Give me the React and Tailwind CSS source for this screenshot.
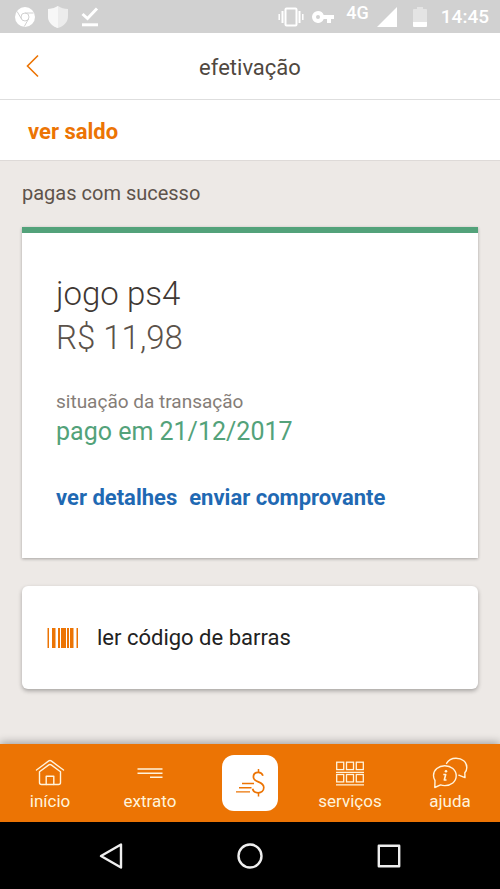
const ChromeIcon = () => (
  <svg className="w-5 h-5" viewBox="0 0 20 20" fill="none" aria-hidden="true">
    <circle cx="10" cy="10" r="10" fill="#fff" />
    <g stroke="#d1d1d1" strokeWidth="1">
      <circle cx="10" cy="10" r="4" />
      <path d="M10 6h8.6M6.5 12 2.2 4.6M13.5 12l-4.3 7.6" />
    </g>
  </svg>
);

const ShieldIcon = () => (
  <svg className="w-[22px] h-6" viewBox="0 0 22 24" aria-hidden="true">
    <path d="M11 1c3 2 6 3 10 3v7c0 6-4 10-10 12C5 21 1 17 1 11V4c4 0 7-1 10-3z" fill="#ececec" />
    <path d="M11 1C8 3 5 4 1 4v7c0 6 4 10 10 12z" fill="#f7f7f7" />
  </svg>
);

const DoneIcon = () => (
  <svg className="w-[18px] h-5" viewBox="0 0 18 20" fill="none" stroke="#fff" aria-hidden="true">
    <path d="M1.5 7 6.5 11.5 16 1.5" strokeWidth="3" />
    <path d="M1 17.8h16" strokeWidth="3" />
  </svg>
);

const VibrateIcon = () => (
  <svg className="w-[26px] h-5" viewBox="0 0 26 20" fill="none" stroke="#fff" aria-hidden="true">
    <rect x="7.5" y="1.5" width="11" height="17" rx="1" strokeWidth="2" />
    <path d="M4.5 4v12M21.5 4v12" strokeWidth="2" />
    <path d="M1.2 7v6M24.8 7v6" strokeWidth="1.5" />
  </svg>
);

const KeyIcon = () => (
  <svg className="w-[22px] h-3" viewBox="0 0 22 12" aria-hidden="true">
    <path
      fill="#fff"
      fillRule="evenodd"
      d="M6 0a6 6 0 1 0 5.7 8H15v4h4V8h3V4H11.7A6 6 0 0 0 6 0zm0 4a2 2 0 1 1 0 4 2 2 0 0 1 0-4z"
    />
  </svg>
);

const SignalIcon = () => (
  <svg className="w-5 h-5" viewBox="0 0 20 20" aria-hidden="true">
    <path d="M0 20 20 0v20z" fill="#fff" />
  </svg>
);

const BatteryIcon = () => (
  <svg className="w-[14px] h-5" viewBox="0 0 14 20" aria-hidden="true">
    <path d="M4 0h6v2h3a1 1 0 0 1 1 1v12H0V3a1 1 0 0 1 1-1h3z" fill="#e4e4e4" />
    <path d="M0 15h14v4a1 1 0 0 1-1 1H1a1 1 0 0 1-1-1z" fill="#fff" />
  </svg>
);

const BarcodeIcon = () => (
  <svg className="w-8 h-5" viewBox="0 0 32 20" fill="#ec7404" aria-hidden="true">
    <rect x="0.5" width="1.5" height="20" />
    <rect x="5" width="3.5" height="20" />
    <rect x="11" width="2" height="20" />
    <rect x="14" width="5" height="20" />
    <rect x="20" width="2" height="20" />
    <rect x="23" width="3.5" height="20" />
    <rect x="29.5" width="1.5" height="20" />
  </svg>
);

const HomeIcon = () => (
  <svg className="w-8 h-8" viewBox="0 0 32 32" fill="none" stroke="currentColor" strokeWidth="1.4" strokeLinecap="round" strokeLinejoin="round" aria-hidden="true">
    <path d="M2.5 13 14.8 3.900a2 2 0 0 1 2.4 0L29.500 13" />
    <path d="M5.500 14.700v10.800a2 2 0 0 0 2 2h17a2 2 0 0 0 2-2V14.700L17.200 7.900a2 2 0 0 0-2.400 0z" />
    <path d="M12.200 27.500v-8.200h7.600v8.200" />
  </svg>
);

const StatementIcon = () => (
  <svg className="w-8 h-8" viewBox="0 0 32 32" fill="none" stroke="currentColor" strokeWidth="1.5" aria-hidden="true">
    <path d="M3.500 12h25M3.500 16.200h25M16 20.300h12.500" />
  </svg>
);

const ServicesIcon = () => (
  <svg className="w-8 h-8" viewBox="0 0 32 32" fill="none" stroke="currentColor" strokeWidth="1.3" aria-hidden="true">
    {[2.7, 12.5, 22.3].map((x) => (
      <g key={x}>
        <rect x={x} y="5.2" width="7" height="7.4" />
        <rect x={x} y="17.5" width="7" height="7.4" />
      </g>
    ))}
    <path d="M2 15.3h28M2 27.8h28" />
  </svg>
);

const HelpIcon = () => (
  <svg className="w-9 h-8" viewBox="0 0 36 32" fill="none" stroke="currentColor" strokeWidth="1.4" strokeLinejoin="round" aria-hidden="true">
    <path d="M2.8 30.500 3 23.500A11.500 10.200 0 0 1 1.500 18.500C1.500 12.800 6.600 8.800 12.800 8.800S24.200 12.800 24.200 18.800 19 28.600 12.800 28.600c-1.600 0-3-.2-4.200-.7z" />
    <path d="M14.600 6.400C16.200 3.200 19.800 1.200 24 1.200c6.200 0 10.800 3.800 10.800 9.200 0 2.300-.8 4-2 5.400l.2 4.800-6.200-2.400" strokeLinecap="round" />
    <circle cx="14" cy="14.300" r="1.300" fill="currentColor" stroke="none" />
    <path d="M11.300 17.500h2.400L12.300 23h2.200" strokeWidth="1.600" />
  </svg>
);

const PayIcon = () => (
  <svg className="w-8 h-8" viewBox="0 0 32 32" fill="none" stroke="currentColor" strokeWidth="1.4" aria-hidden="true">
    <path d="M8 16.500h12M5 20.700h12.500M2 24.900h14" />
    <path d="M29 8.800C28.200 6.600 26.400 5.400 24.400 5.400c-2.900 0-5 1.700-5 4.500 0 6.100 10.400 3.800 10.400 10.700 0 3.200-2.400 5.200-5.700 5.200-2.800 0-4.900-1.500-5.500-4" strokeWidth="1.700" />
    <path d="M24.500 2v3.400M24.500 25.800v3.600" strokeWidth="1.500" />
  </svg>
);

const NavItem = ({ icon: Icon, label }) => (
  <a href="#" className="flex-1 flex flex-col items-center pt-1">
    <Icon />
    <span className="text-[17px] leading-6">{label}</span>
  </a>
);

export default function App() {
  return (
    <div className="min-h-screen flex flex-col bg-[#ede9e6] font-['Roboto',sans-serif]">
      {/* Status bar */}
      <div className="h-[33px] flex items-center justify-between pl-[15px] pr-[11px] bg-[#d1d1d1] text-white">
        <div className="flex items-center gap-3">
          <ChromeIcon />
          <ShieldIcon />
          <DoneIcon />
        </div>
        <div className="flex items-center">
          <VibrateIcon />
          <span className="ml-2"><KeyIcon /></span>
          <span className="ml-3 mb-2 text-lg leading-6 font-medium">4G</span>
          <span className="ml-2"><SignalIcon /></span>
          <span className="ml-4"><BatteryIcon /></span>
          <span className="ml-3.5 text-[19px] leading-6 font-medium">14:45</span>
        </div>
      </div>

      {/* Header */}
      <header className="grid grid-cols-[64px_1fr_64px] items-center h-[67px] bg-white border-b border-[#dedede]">
        <button aria-label="voltar" className="h-full flex items-center justify-center text-[#ec7404]">
          <svg className="w-4 h-6" viewBox="0 0 16 24" fill="none" stroke="currentColor" strokeWidth="1.6" aria-hidden="true">
            <path d="M14 1.500 3.500 12 14 22.500" />
          </svg>
        </button>
        <h1 className="pt-1 text-center text-[22px] leading-7 text-[#50483f]">efetivação</h1>
      </header>

      <div className="h-[61px] flex items-center px-7 pt-1 bg-white border-b border-[#dedad8]">
        <button className="text-[22px] leading-7 font-bold text-[#ec7404]">ver saldo</button>
      </div>

      <main className="flex-1 px-[22px] pt-[18px]">
        <h2 className="text-[20px] leading-7 text-[#5e534b]">pagas com sucesso</h2>

        {/* Payment card */}
        <section className="mt-5 px-[34px] pt-[39px] pb-[46px] bg-white border-t-6 border-[#53a27a] shadow-[0_1px_3px_rgba(0,0,0,0.3)]">
          <p className="text-[33px] leading-11 font-light text-[#3f3833]">jogo ps4</p>
          <p className="text-[33px] leading-11 font-light text-[#5b524a]">R$ 11,98</p>
          <p className="mt-7 text-[19px] leading-7 text-[#857d77]">situação da transação</p>
          <p className="text-[25px] leading-8 text-[#53a27a]">pago em 21/12/2017</p>
          <div className="mt-9 flex gap-3 text-[22px] leading-7 font-bold text-[#1f69b3]">
            <a href="#">ver detalhes</a>
            <a href="#">enviar comprovante</a>
          </div>
        </section>

        <button className="mt-7 w-full h-[103px] flex items-center gap-[18px] px-[25px] rounded-md bg-white shadow-[0_2px_4px_rgba(0,0,0,0.3)] text-[22px] leading-7 text-[#222]">
          <BarcodeIcon />
          ler código de barras
        </button>
      </main>

      {/* Tab bar */}
      <nav className="h-[78px] flex items-center bg-[#ec7404] text-[#fff3dc] shadow-[0_-2px_8px_rgba(0,0,0,0.3)]">
        <NavItem icon={HomeIcon} label="início" />
        <NavItem icon={StatementIcon} label="extrato" />
        <div className="flex-1 flex justify-center">
          <a href="#" aria-label="pagar" className="w-14 h-14 flex items-center justify-center rounded-xl bg-white text-[#ec7404]">
            <PayIcon />
          </a>
        </div>
        <NavItem icon={ServicesIcon} label="serviços" />
        <NavItem icon={HelpIcon} label="ajuda" />
      </nav>

      {/* System navigation */}
      <div className="h-[67px] flex items-center justify-center gap-[111px] bg-black text-[#eee]">
        <button aria-label="voltar">
          <svg className="w-7 h-7" viewBox="0 0 28 28" fill="none" stroke="currentColor" strokeWidth="2.4" strokeLinejoin="round" aria-hidden="true">
            <path d="M24 2.500v23L4 14z" />
          </svg>
        </button>
        <button aria-label="início">
          <svg className="w-7 h-7" viewBox="0 0 28 28" fill="none" stroke="currentColor" strokeWidth="2.4" aria-hidden="true">
            <circle cx="14" cy="14" r="11.500" />
          </svg>
        </button>
        <button aria-label="recentes">
          <svg className="w-7 h-7" viewBox="0 0 28 28" fill="none" stroke="currentColor" strokeWidth="2.4" strokeLinejoin="round" aria-hidden="true">
            <rect x="3.800" y="3.800" width="20.400" height="20.400" />
          </svg>
        </button>
      </div>
    </div>
  );
}
